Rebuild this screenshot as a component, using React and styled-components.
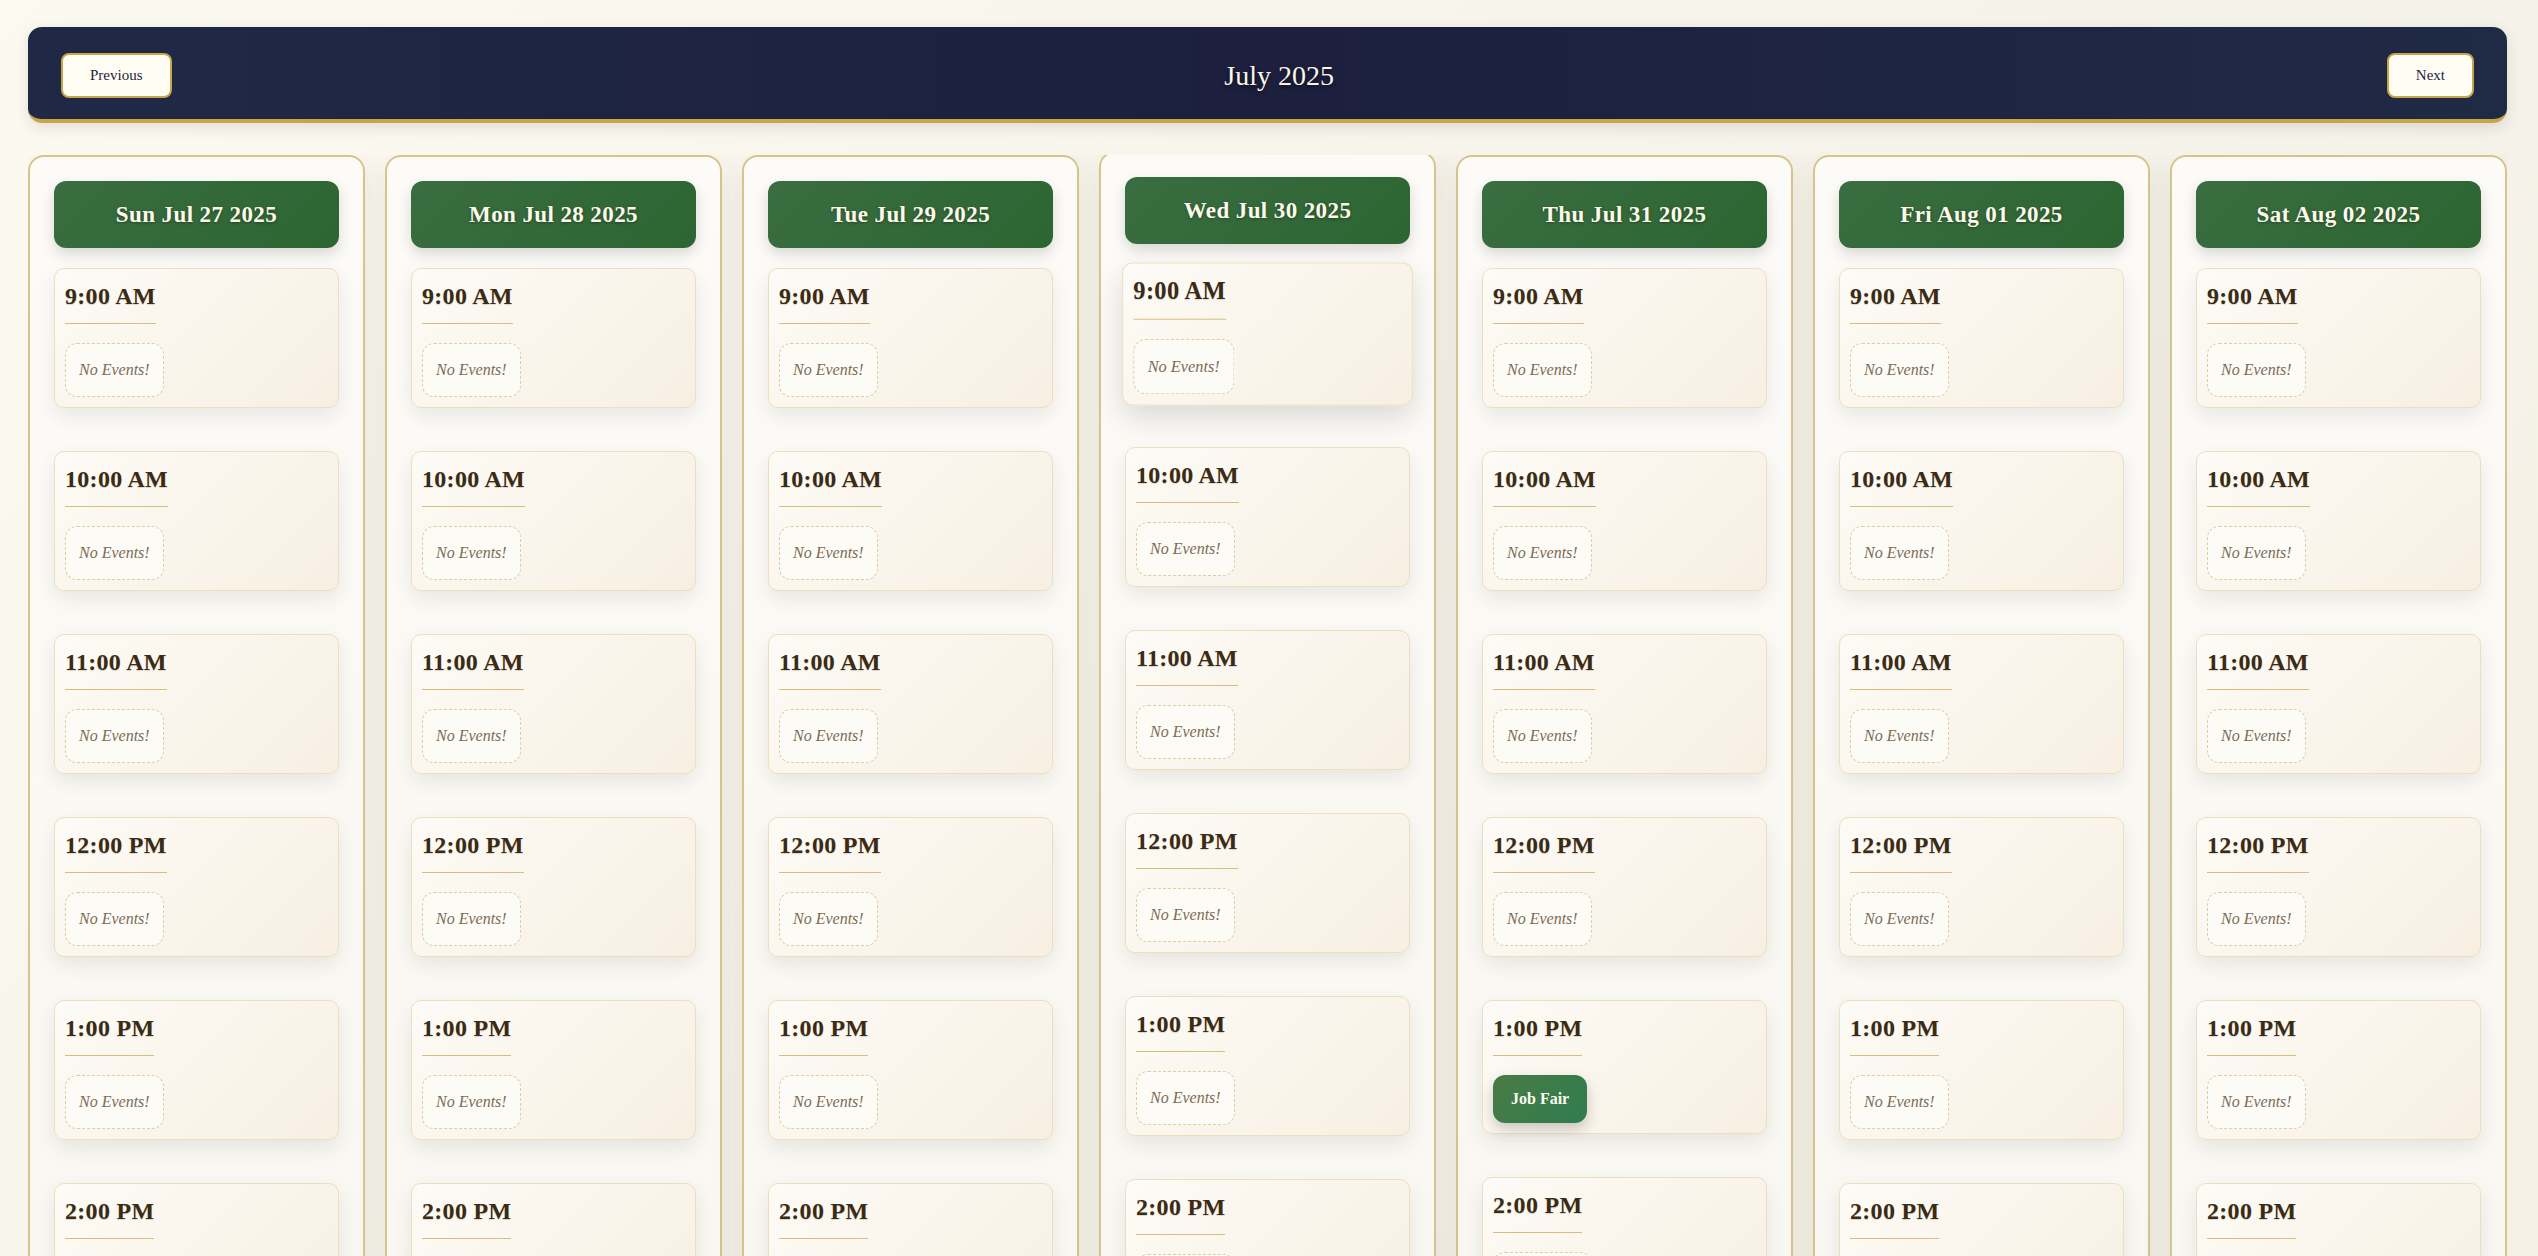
import styled, { createGlobalStyle } from 'styled-components';

const GlobalStyle = createGlobalStyle`
html, body {
  margin: 0;
  height: 100%;
  overflow: hidden;
}
body {
  background: linear-gradient(135deg, #fcf9f1 0%, #f6f3ea 50%, #f4f0e6 100%);
  font-family: "Liberation Serif", "Times New Roman", serif;
}
`;

const days = [
  { label: 'Sun Jul 27 2025' },
  { label: 'Mon Jul 28 2025' },
  { label: 'Tue Jul 29 2025' },
  { label: 'Wed Jul 30 2025', lifted: true, hoverSlot: 0 },
  { label: 'Thu Jul 31 2025', events: { 4: 'Job Fair' } },
  { label: 'Fri Aug 01 2025' },
  { label: 'Sat Aug 02 2025' },
];

const hours = ['9:00 AM', '10:00 AM', '11:00 AM', '12:00 PM', '1:00 PM', '2:00 PM', '3:00 PM', '4:00 PM', '5:00 PM'];

const App = () => {
  return (
    <>
      <GlobalStyle />
      <Page>
        <NavBar>
          <NavButton>Previous</NavButton>
          <MonthTitle>July 2025</MonthTitle>
          <NavButton>Next</NavButton>
        </NavBar>
        <Week>
          {days.map((day) => (
            <DayColumn key={day.label} $lifted={day.lifted}>
              <DayHeader>{day.label}</DayHeader>
              <SlotList>
                {hours.map((hour, i) => {
                  const event = day.events && day.events[i];
                  return (
                    <SlotCard key={hour} $hovered={day.hoverSlot === i}>
                      <TimeLabel>{hour}</TimeLabel>
                      {event ? <EventChip>{event}</EventChip> : <EmptyNote>No Events!</EmptyNote>}
                    </SlotCard>
                  );
                })}
              </SlotList>
            </DayColumn>
          ))}
        </Week>
      </Page>
    </>
  );
};

const Page = styled.div`
padding: 27px 31px 40px 28px;
`;

const NavBar = styled.header`
display: flex;
align-items: center;
justify-content: space-between;
padding: 26px 33px 21px;
background: linear-gradient(90deg, #1f2945 0%, #1c1f3e 50%, #1f2a45 100%);
border-radius: 14px;
border-bottom: 4px solid #c9a548;
box-shadow: 0 4px 14px rgba(30, 30, 50, 0.12);
`;

const NavButton = styled.button`
font-family: "Liberation Serif", "Times New Roman", serif;
font-size: 15px;
line-height: 17px;
color: #1c1f3d;
background: #fffdf3;
border: 2px solid #c9a548;
border-radius: 8px;
padding: 12px 27px;
cursor: pointer;
`;

const MonthTitle = styled.h1`
margin: 0;
font-size: 28px;
font-weight: 400;
color: #fbf6e6;
text-shadow: 0 2px 4px rgba(0, 0, 0, 0.55);
`;

const Week = styled.div`
display: grid;
grid-template-columns: repeat(7, 1fr);
gap: 20px;
margin-top: 32px;
overflow: hidden;
`;

const DayColumn = styled.section`
min-width: 0;
border: 2px solid #d6c48c;
border-radius: 16px;
padding: 24px;
background: linear-gradient(180deg, #fcfbf7 0%, #f7f5ef 100%);
box-shadow: 0 10px 30px rgba(70, 60, 30, 0.09);
transform: ${(p) => (p.$lifted ? 'translateY(-4px)' : 'none')};
`;

const DayHeader = styled.h2`
margin: 0 0 20px;
height: 67px;
display: flex;
align-items: center;
justify-content: center;
border-radius: 12px;
background: linear-gradient(135deg, #3a6d41 0%, #2c6532 100%);
color: #fdf8ea;
font-size: 23px;
font-weight: 700;
letter-spacing: 0.4px;
text-shadow: 0 1px 3px rgba(0, 0, 0, 0.35);
box-shadow: 0 6px 14px rgba(0, 0, 0, 0.14);
`;

const SlotList = styled.div`
display: flex;
flex-direction: column;
gap: 43px;
`;

const SlotCard = styled.div`
display: flex;
flex-direction: column;
align-items: flex-start;
padding: 13px 10px 10px;
border: 1px solid #ecdfbd;
border-radius: 10px;
background: linear-gradient(135deg, #fdfbf6 0%, #f7efe2 100%);
box-shadow: ${(p) => (p.$hovered ? '0 12px 28px rgba(0, 0, 0, 0.13)' : '0 8px 20px rgba(0, 0, 0, 0.08)')};
transform: ${(p) => (p.$hovered ? 'scale(1.02)' : 'none')};
`;

const TimeLabel = styled.div`
font-size: 24px;
font-weight: 700;
line-height: 28px;
letter-spacing: 0.3px;
color: #3b2b14;
padding-bottom: 13px;
border-bottom: 1.5px solid #d6bf7e;
margin-bottom: 19px;
text-shadow: 0 1px 1px rgba(0, 0, 0, 0.15);
`;

const EmptyNote = styled.div`
padding: 17px 13px;
border: 1px dashed #dccda3;
border-radius: 12px;
background: #fdfbf5;
font-size: 16px;
font-style: italic;
line-height: 18px;
color: #7b6b57;
`;

const EventChip = styled.div`
padding: 15px 18px;
border-radius: 12px;
background: linear-gradient(135deg, #4b7a45 0%, #2e7d4f 100%);
color: #fdfaf0;
font-size: 16px;
font-weight: 700;
line-height: 18px;
box-shadow: 0 6px 14px rgba(0, 0, 0, 0.2);
`;

export default App;
